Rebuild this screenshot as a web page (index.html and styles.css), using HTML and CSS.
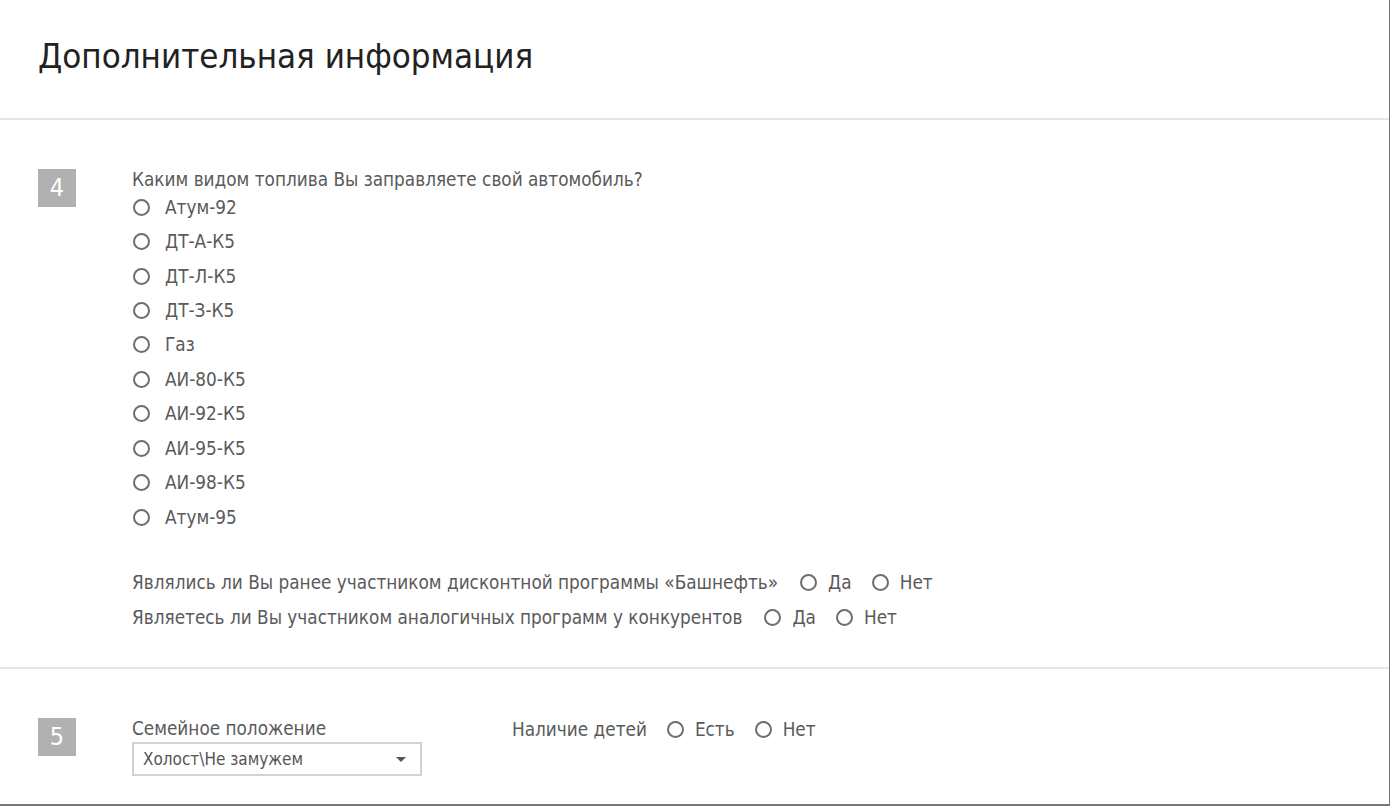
FILE: index.html
```html
<!DOCTYPE html>
<html lang="ru">
<head>
<meta charset="utf-8">
<title>Дополнительная информация</title>
<link rel="stylesheet" href="styles.css">
</head>
<body>
<div class="page">
  <header class="header">
    <h1 class="title">Дополнительная информация</h1>
  </header>

  <section class="section section-4">
    <div class="badge">4</div>
    <div class="content">
      <div class="question">Каким видом топлива Вы заправляете свой автомобиль?</div>
      <ul class="options">
        <li class="option"><span class="radio"></span><span class="label">Атум-92</span></li>
        <li class="option"><span class="radio"></span><span class="label">ДТ-А-К5</span></li>
        <li class="option"><span class="radio"></span><span class="label">ДТ-Л-К5</span></li>
        <li class="option"><span class="radio"></span><span class="label">ДТ-З-К5</span></li>
        <li class="option"><span class="radio"></span><span class="label">Газ</span></li>
        <li class="option"><span class="radio"></span><span class="label">АИ-80-К5</span></li>
        <li class="option"><span class="radio"></span><span class="label">АИ-92-К5</span></li>
        <li class="option"><span class="radio"></span><span class="label">АИ-95-К5</span></li>
        <li class="option"><span class="radio"></span><span class="label">АИ-98-К5</span></li>
        <li class="option"><span class="radio"></span><span class="label">Атум-95</span></li>
      </ul>
      <div class="yesno-list">
        <div class="yesno">
          <span class="yesno-text">Являлись ли Вы ранее участником дисконтной программы «Башнефть»</span>
          <span class="choice"><span class="radio"></span><span class="label">Да</span></span>
          <span class="choice"><span class="radio"></span><span class="label">Нет</span></span>
        </div>
        <div class="yesno">
          <span class="yesno-text">Являетесь ли Вы участником аналогичных программ у конкурентов</span>
          <span class="choice"><span class="radio"></span><span class="label">Да</span></span>
          <span class="choice"><span class="radio"></span><span class="label">Нет</span></span>
        </div>
      </div>
    </div>
  </section>

  <section class="section section-5">
    <div class="badge">5</div>
    <div class="content content-row">
      <div class="field">
        <div class="field-label">Семейное положение</div>
        <div class="select">
          <span class="select-value">Холост\Не замужем</span>
          <span class="select-arrow"></span>
        </div>
      </div>
      <div class="yesno children">
        <span class="yesno-text">Наличие детей</span>
        <span class="choice"><span class="radio"></span><span class="label">Есть</span></span>
        <span class="choice"><span class="radio"></span><span class="label">Нет</span></span>
      </div>
    </div>
  </section>
</div>
</body>
</html>
```
FILE: styles.css
```css
* { box-sizing: border-box; }
html, body { margin: 0; padding: 0; background: #fff; }
body {
  font-family: "DejaVu Sans Condensed", "DejaVu Sans", sans-serif;
  font-size: 18.8px;
  color: #5a5a5a;
}
.page {
  width: 1390px;
  height: 806px;
  border-right: 1px solid #777;
  border-bottom: 2px solid #777;
  overflow: hidden;
}
.header {
  height: 120px;
  padding: 36px 0 0 38px;
  border-bottom: 2px solid #e6e6e6;
}
.title {
  margin: 0;
  font-weight: normal;
  font-size: 34.6px;
  line-height: 40px;
  color: #222;
}
.section {
  display: flex;
  gap: 56px;
  padding: 49px 0 0 38px;
}
.section-4 {
  height: 549px;
  border-bottom: 2px solid #e6e6e6;
}
.badge {
  flex: none;
  width: 38px;
  height: 38px;
  background: #b1b1b1;
  color: #fff;
  font-size: 25px;
  line-height: 38px;
  text-align: center;
}
.content { flex: 1; }
.question { line-height: 21px; }
.options {
  list-style: none;
  margin: 0;
  padding: 0;
}
.option {
  display: flex;
  align-items: center;
  height: 34.44px;
}
.option .radio { margin: 0 15px 0 1px; }
.radio {
  flex: none;
  display: inline-block;
  width: 17px;
  height: 17px;
  border: 2px solid #6e6e6e;
  border-radius: 50%;
}
.yesno-list { margin-top: 31px; }
.yesno {
  display: flex;
  align-items: center;
  height: 35px;
  white-space: nowrap;
}
.yesno-text { margin-right: 22px; }
.choice {
  display: inline-flex;
  align-items: center;
  gap: 11px;
  margin-right: 20px;
}
.content-row {
  display: flex;
}
.field { width: 380px; }
.field-label { line-height: 22px; }
.select {
  margin-top: 2px;
  width: 290px;
  height: 34px;
  border: 2px solid #d2d2d2;
  display: flex;
  align-items: center;
  justify-content: space-between;
  padding: 0 14px 0 9px;
  font-size: 17px;
  color: #555;
}
.select-arrow {
  width: 0;
  height: 0;
  border-left: 5px solid transparent;
  border-right: 5px solid transparent;
  border-top: 5px solid #555;
}
.children {
  height: 22px;
  align-self: flex-start;
}
.children .yesno-text { margin-right: 20px; }
.children .choice { gap: 11px; margin-right: 20px; }
```
